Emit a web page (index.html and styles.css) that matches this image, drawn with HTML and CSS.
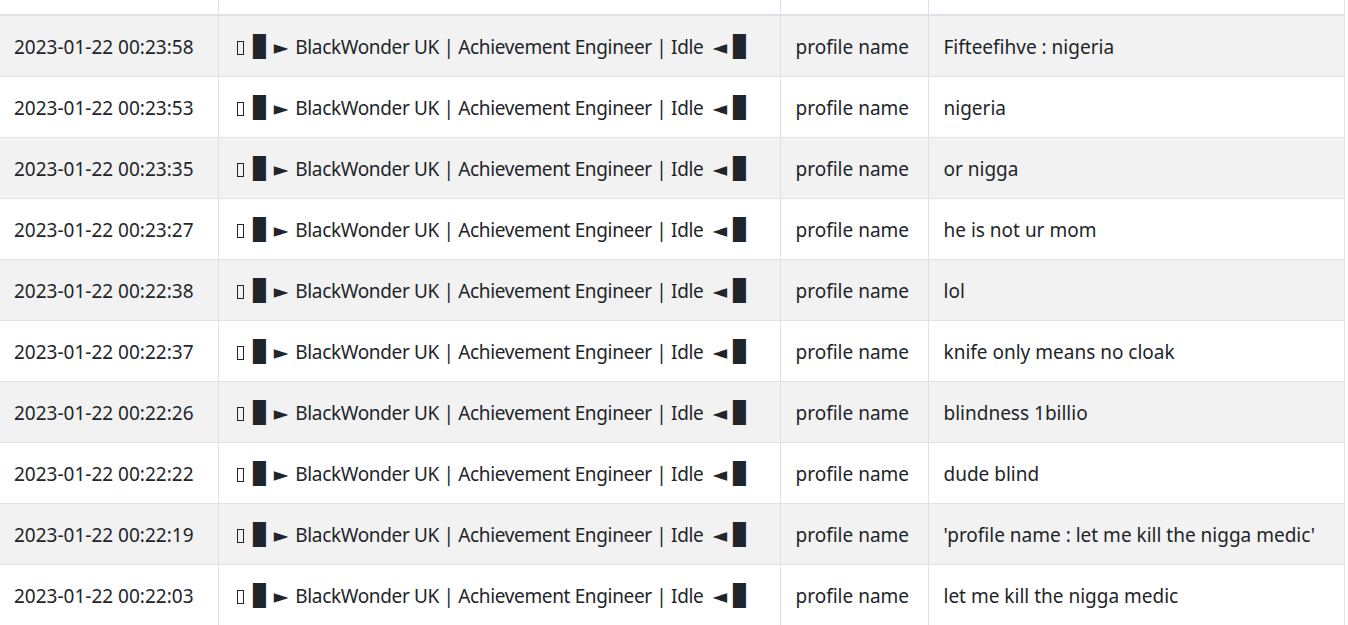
FILE: index.html
```html
<!DOCTYPE html>
<html lang="en">
<head>
    <meta charset="UTF-8">
    <meta name="viewport" content="width=device-width, initial-scale=1.0">
    <title>Chat Log</title>
    <link rel="stylesheet" href="styles.css">
</head>
<body>
    <table class="log-table">
        <colgroup>
            <col class="col-time">
            <col class="col-server">
            <col class="col-name">
            <col class="col-msg">
        </colgroup>
        <thead>
            <tr><th></th><th></th><th></th><th></th></tr>
        </thead>
        <tbody id="logBody"></tbody>
    </table>
    <script>
        const rows = [
            ['2023-01-22 00:23:58', 'Fifteefihve : nigeria'],
            ['2023-01-22 00:23:53', 'nigeria'],
            ['2023-01-22 00:23:35', 'or nigga'],
            ['2023-01-22 00:23:27', 'he is not ur mom'],
            ['2023-01-22 00:22:38', 'lol'],
            ['2023-01-22 00:22:37', 'knife only means no cloak'],
            ['2023-01-22 00:22:26', 'blindness 1billio'],
            ['2023-01-22 00:22:22', 'dude blind'],
            ['2023-01-22 00:22:19', "'profile name : let me kill the nigga medic'"],
            ['2023-01-22 00:22:03', 'let me kill the nigga medic']
        ];
        const body = document.getElementById('logBody');
        rows.forEach(row => {
            const tr = document.createElement('tr');
            tr.innerHTML = `
                <td>${row[0]}</td>
                <td><span class="tofu"></span><span class="block">█</span><span class="arrow">►</span><span class="server">BlackWonder UK | Achievement Engineer | Idle</span><span class="arrow">◄</span><span class="block">█</span></td>
                <td>profile name</td>
                <td>${row[1]}</td>`;
            body.appendChild(tr);
        });
    </script>
</body>
</html>
```

FILE: styles.css
```css
body {
    margin: 0;
    font-family: 'Noto Sans', 'Open Sans', sans-serif;
    font-size: 19px;
    color: #212529;
    background: #fff;
    overflow: hidden;
}
.log-table {
    border-collapse: collapse;
    table-layout: fixed;
    width: 1344px;
}
.col-time { width: 218px; }
.col-server { width: 562px; }
.col-name { width: 148px; }
.col-msg { width: 416px; }
.log-table th {
    height: 14px;
    padding: 0;
    border-right: 1px solid #dee2e6;
    border-bottom: 2px solid #dee2e6;
}
.log-table td {
    height: 30px;
    padding: 16px 15px 14px;
    line-height: 30px;
    white-space: nowrap;
    border-right: 1px solid #dee2e6;
    border-bottom: 1px solid #dee2e6;
}
.log-table td:first-child {
    padding-left: 14px;
}
.log-table tbody tr:nth-child(odd) {
    background-color: #f2f2f2;
}
.tofu {
    display: inline-block;
    width: 5.5px;
    height: 12px;
    border: 1.5px solid #212529;
    vertical-align: -1px;
    margin: 0 9px 0 3px;
}
.block {
    font-family: 'DejaVu Sans Mono', monospace;
    font-size: 21px;
    line-height: 0;
}
.arrow {
    font-family: 'DejaVu Sans', sans-serif;
    font-size: 19px;
    line-height: 0;
    margin-left: 8px;
}
.server {
    letter-spacing: -0.35px;
    margin: 0 1px 0 7px;
}
.arrow + .block {
    margin-left: 6px;
}
```
